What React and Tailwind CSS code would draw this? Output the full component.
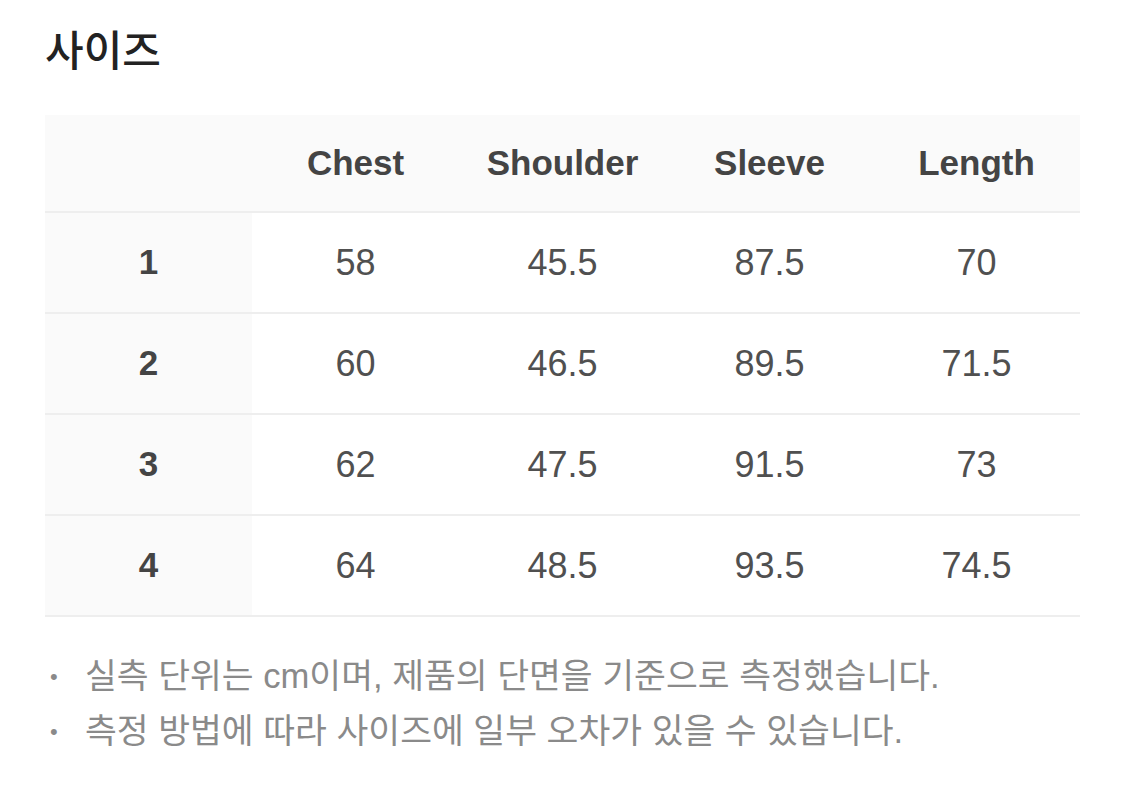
import React from 'react';

const headers = ['Chest', 'Shoulder', 'Sleeve', 'Length'];

const rows = [
    { size: '1', values: ['58', '45.5', '87.5', '70'] },
    { size: '2', values: ['60', '46.5', '89.5', '71.5'] },
    { size: '3', values: ['62', '47.5', '91.5', '73'] },
    { size: '4', values: ['64', '48.5', '93.5', '74.5'] },
];

const notes = [
    '실측 단위는 cm이며, 제품의 단면을 기준으로 측정했습니다.',
    '측정 방법에 따라 사이즈에 일부 오차가 있을 수 있습니다.',
];

const App = () => {
    return (
        <main className="min-h-screen bg-white px-[45px] pt-[26px] font-['Liberation_Sans','Noto_Sans_CJK_KR',sans-serif]">
            <h1 className="text-[42px] font-medium leading-[52px] text-[#222222]">사이즈</h1>

            {/* Size table */}
            <div className="mt-[37px] w-[1035px]">
                <div className="grid h-[98px] grid-cols-5 items-center border-b-2 border-[#eeeeee] bg-[#fafafa]">
                    <div />
                    {headers.map((h) => (
                        <div key={h} className="text-center text-[35px] font-bold text-[#444444]">
                            {h}
                        </div>
                    ))}
                </div>
                {rows.map((row) => (
                    <div key={row.size} className="grid h-[101px] grid-cols-5 border-b-2 border-[#eeeeee]">
                        <div className="flex items-center justify-center bg-[#fafafa] text-[35px] font-bold text-[#444444]">
                            {row.size}
                        </div>
                        {row.values.map((v, i) => (
                            <div key={i} className="flex items-center justify-center text-[36px] text-[#505050]">
                                {v}
                            </div>
                        ))}
                    </div>
                ))}
            </div>

            {/* Notes */}
            <ul className="mt-[32px]">
                {notes.map((n) => (
                    <li key={n} className="flex items-center text-[34.6px] leading-[55px] text-[#8a8a8a]">
                        <span className="w-[40px] pl-[5px] text-[22px]">•</span>
                        <span>{n}</span>
                    </li>
                ))}
            </ul>
        </main>
    );
};

export default App;
